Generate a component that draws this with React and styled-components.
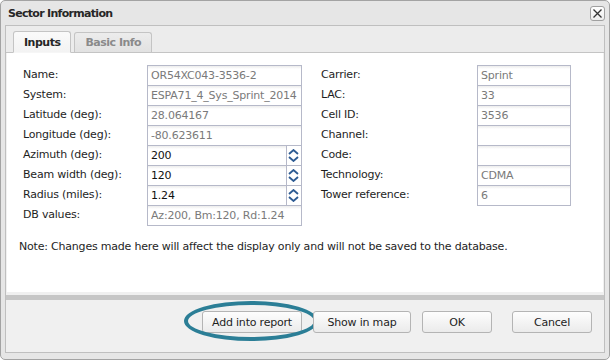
import React from 'react';
import styled, { createGlobalStyle } from 'styled-components';

const FONT = `"DejaVu Sans", Verdana, sans-serif`;

const GlobalStyle = createGlobalStyle`
  html, body {
    margin: 0;
    padding: 0;
    background: #ffffff;
  }
  body {
    font-family: ${FONT};
  }
`;

const Window = styled.div`
  position: relative;
  box-sizing: border-box;
  width: 610px;
  height: 360px;
  border: 1px solid #a3a3a3;
  border-radius: 5px;
  background: #e6e6e6;
  padding: 0 4px 6px 4px;
  display: flex;
  flex-direction: column;
  font: 11px ${FONT};
  letter-spacing: -0.2px;
  color: #1e1e1e;
`;

const Header = styled.div`
  height: 24px;
  display: flex;
  align-items: center;
  justify-content: space-between;
  padding-left: 3px;
`;

const Title = styled.span`
  font-weight: bold;
  letter-spacing: -0.7px;
  color: #262626;
`;

const CloseButton = styled.button`
  box-sizing: border-box;
  width: 15px;
  height: 15px;
  padding: 0;
  border: 1px solid #a0a0a0;
  border-radius: 3px;
  background: linear-gradient(#ffffff, #ececec);
  display: flex;
  align-items: center;
  justify-content: center;
`;

const Frame = styled.div`
  flex: 1;
  display: flex;
  flex-direction: column;
  border: 1px solid #bfbfbf;
  background: #f0f0f0;
`;

const TabBar = styled.div`
  height: 26px;
  display: flex;
  align-items: flex-end;
  gap: 3px;
  padding-left: 7px;
  background: #ececec;
  border-bottom: 1px solid #c4c4c4;
`;

const Tab = styled.div`
  box-sizing: border-box;
  height: ${({ $active }) => ($active ? '22px' : '20px')};
  margin-bottom: ${({ $active }) => ($active ? '-1px' : '0')};
  padding: 0 10px;
  display: flex;
  align-items: center;
  border: 1px solid #c4c4c4;
  border-bottom: ${({ $active }) => ($active ? '1px solid #f6f6f6' : '0')};
  border-radius: 3px 3px 0 0;
  background: ${({ $active }) =>
    $active ? 'linear-gradient(#fafafa, #f3f3f3)' : 'linear-gradient(#ececec, #e2e2e2)'};
  font-weight: bold;
  letter-spacing: -0.5px;
  color: ${({ $active }) => ($active ? '#262626' : '#8a8a8a')};
`;

const Content = styled.div`
  flex: 1;
  background: #ffffff;
  margin: 0 1px;
  padding: 12px 0 0 16px;
  border-bottom: 3px solid #f0f0f0;
`;

const Band = styled.div`
  height: 5px;
  background: #c6c6c6;
`;

const Form = styled.div`
  display: flex;
  gap: 19px;
`;

const FieldGrid = styled.div`
  display: grid;
  grid-template-columns: ${({ $label }) => $label}px ${({ $input }) => $input}px;
  grid-auto-rows: 20px;
`;

const Label = styled.div`
  line-height: 20px;
  white-space: nowrap;
`;

const TextInput = styled.input`
  box-sizing: border-box;
  width: 100%;
  height: 21px;
  margin: 0;
  padding: 0 3px;
  border: 1px solid #b6b9c9;
  border-radius: 0;
  outline: none;
  background: #ffffff linear-gradient(#ececec, #ffffff 3px);
  font: 11px ${FONT};
  letter-spacing: -0.2px;
  color: ${({ readOnly }) => (readOnly ? '#7a7a7a' : '#111111')};
`;

const SpinBox = styled.div`
  display: flex;
  height: 21px;
`;

const SpinTrigger = styled.div`
  box-sizing: border-box;
  width: 17px;
  height: 21px;
  display: flex;
  flex-direction: column;
  justify-content: space-between;
  align-items: center;
  padding: 3px 0 3px;
  border: 1px solid #b6b9c9;
  border-left: 0;
  background: #ffffff;
`;

const Note = styled.p`
  margin: 15px 0 0 -4px;
  line-height: 14px;
`;

const Footer = styled.div`
  height: 52px;
  display: flex;
  justify-content: flex-end;
  align-items: flex-start;
  padding: 11px 12px 0 0;
  box-sizing: border-box;
`;

const ButtonWrap = styled.div`
  position: relative;
  margin-left: ${({ $gap }) => $gap}px;
`;

const Button = styled.button`
  box-sizing: border-box;
  width: ${({ $width }) => $width}px;
  height: 22px;
  padding: 0;
  border: 1px solid #b4b4b4;
  border-radius: 3px;
  background: linear-gradient(#fdfdfd, #ebebeb);
  font: 11px ${FONT};
  letter-spacing: -0.2px;
  color: #1e1e1e;
`;

const Highlight = styled.div`
  position: absolute;
  left: -18px;
  top: -10px;
  right: -16px;
  bottom: -8px;
  border: 4px solid #2b7e96;
  border-radius: 50%;
  pointer-events: none;
`;

const Arrow = ({ up }) => (
  <svg width="11" height="6" viewBox="0 0 11 6">
    <path
      d={up ? 'M1 5 L5.5 1 L10 5' : 'M1 1 L5.5 5 L10 1'}
      fill="none"
      stroke="#2d5b93"
      strokeWidth="1.8"
    />
  </svg>
);

const Spinner = ({ value }) => (
  <SpinBox>
    <TextInput value={value} onChange={() => {}} />
    <SpinTrigger>
      <Arrow up />
      <Arrow />
    </SpinTrigger>
  </SpinBox>
);

const leftFields = [
  { label: 'Name:', value: 'OR54XC043-3536-2' },
  { label: 'System:', value: 'ESPA71_4_Sys_Sprint_2014' },
  { label: 'Latitude (deg):', value: '28.064167' },
  { label: 'Longitude (deg):', value: '-80.623611' },
  { label: 'Azimuth (deg):', value: '200', spin: true },
  { label: 'Beam width (deg):', value: '120', spin: true },
  { label: 'Radius (miles):', value: '1.24', spin: true },
  { label: 'DB values:', value: 'Az:200, Bm:120, Rd:1.24' },
];

const rightFields = [
  { label: 'Carrier:', value: 'Sprint' },
  { label: 'LAC:', value: '33' },
  { label: 'Cell ID:', value: '3536' },
  { label: 'Channel:', value: '' },
  { label: 'Code:', value: '' },
  { label: 'Technology:', value: 'CDMA' },
  { label: 'Tower reference:', value: '6' },
];

const Fields = ({ fields, label, input }) => (
  <FieldGrid $label={label} $input={input}>
    {fields.map(f => (
      <React.Fragment key={f.label}>
        <Label>{f.label}</Label>
        {f.spin ? <Spinner value={f.value} /> : <TextInput readOnly value={f.value} />}
      </React.Fragment>
    ))}
  </FieldGrid>
);

const App = () => (
  <>
    <GlobalStyle />
    <Window>
      <Header>
        <Title>Sector Information</Title>
        <CloseButton aria-label="Close">
          <svg width="9" height="9" viewBox="0 0 9 9">
            <path d="M0.5 0.5 L8.5 8.5 M8.5 0.5 L0.5 8.5" stroke="#333" strokeWidth="1.3" />
          </svg>
        </CloseButton>
      </Header>
      <Frame>
        <TabBar>
          <Tab $active>Inputs</Tab>
          <Tab>Basic Info</Tab>
        </TabBar>
        <Content>
          <Form>
            <Fields fields={leftFields} label={124} input={155} />
            <Fields fields={rightFields} label={156} input={94} />
          </Form>
          <Note>
            Note: Changes made here will affect the display only and will not be saved to the database.
          </Note>
        </Content>
        <Band />
        <Footer>
          <ButtonWrap $gap={0}>
            <Button $width={100}>Add into report</Button>
            <Highlight />
          </ButtonWrap>
          <ButtonWrap $gap={11}>
            <Button $width={98}>Show in map</Button>
          </ButtonWrap>
          <ButtonWrap $gap={11}>
            <Button $width={70}>OK</Button>
          </ButtonWrap>
          <ButtonWrap $gap={20}>
            <Button $width={80}>Cancel</Button>
          </ButtonWrap>
        </Footer>
      </Frame>
    </Window>
  </>
);

export default App;
